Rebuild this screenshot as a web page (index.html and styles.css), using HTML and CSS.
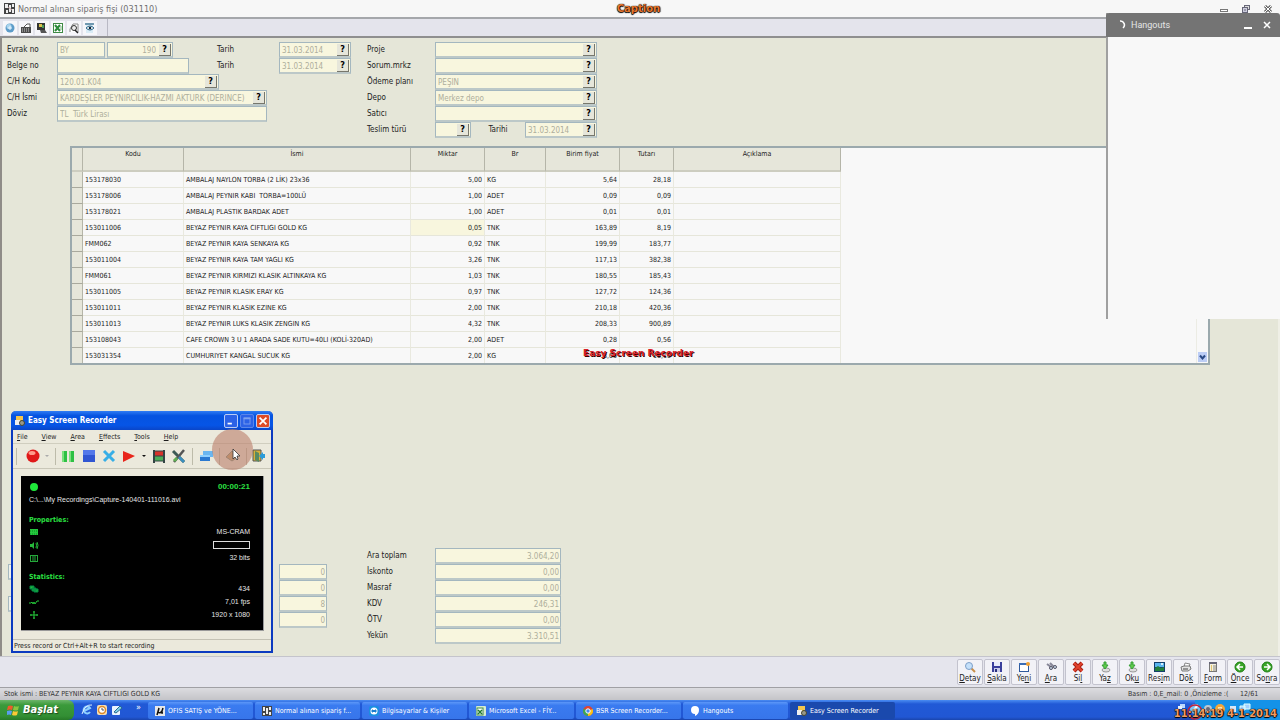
FILE: index.html
```html
<!DOCTYPE html>
<html lang="tr">
<head>
    <meta charset="UTF-8">
    <meta name="viewport" content="width=device-width, initial-scale=1.0">
    <title>Normal alınan sipariş fişi (031110)</title>
    <link rel="stylesheet" href="styles.css">
</head>
<body>
    <header class="title-bar">
        <div class="title-text">
            <svg class="title-icon" viewBox="0 0 11 11"><rect width="11" height="11" fill="#444"/><path d="M1 1h3v4H1zM5 2h2v7H5zM8 1h2v3H8zM2 7h2v3H2zM8 6h2v4H8z" fill="#eee"/><path d="M4 4l4 3" stroke="#b99" /></svg>
            <h1>Normal alınan sipariş fişi (031110)</h1>
        </div>
        <span class="caption">Caption</span>
        <div class="window-buttons">
            <button aria-label="Simge durumuna küçült"><svg viewBox="0 0 10 8"><rect x="1.5" y="4.5" width="7" height="2" fill="#fff" stroke="#777"/></svg></button>
            <button aria-label="Geri yükle"><svg viewBox="0 0 10 8"><rect x="3.5" y=".5" width="5" height="4" fill="#ddd" stroke="#667"/><rect x="1.5" y="2.5" width="5" height="5" fill="#ccd" stroke="#667"/><path d="M3 5h2" stroke="#667"/></svg></button>
            <button aria-label="Kapat"><svg viewBox="0 0 10 8"><path d="M2 1l6 6M8 1L2 7" stroke="#666" stroke-width="3"/><path d="M2 1l6 6M8 1L2 7" stroke="#fff"/></svg></button>
        </div>
    </header>

    <nav class="toolbar">
        <div class="toolbar-group">
            <button aria-label="Bilgi"><svg viewBox="0 0 12 12"><circle cx="6" cy="6" r="4.5" fill="#5d9cc9"/><circle cx="5" cy="4.5" r="2.5" fill="#a9d4ee"/><path d="M6 4v4M4 6h4" stroke="#e8f5ff"/></svg></button>
            <button aria-label="Yazdır"><svg viewBox="0 0 12 12"><path d="M4 5l3-3h3v3" fill="#fff" stroke="#555"/><path d="M1 5h10v6H1z" fill="#4c4c4c"/><path d="M2 7h8M2 9h8" stroke="#ccc" stroke-dasharray="1 1"/></svg></button>
            <button aria-label="Ekran"><svg viewBox="0 0 12 12"><rect x="1" y="1" width="8" height="7" fill="#333"/><path d="M3 2h3v3H3z" fill="#d8c24a"/><path d="M6 3h2v3H6z" fill="#4a9a5a"/><path d="M4 8h5l2 3H5z" fill="#555"/></svg></button>
            <button aria-label="Excel"><svg viewBox="0 0 12 12"><rect x="1.5" y="1.5" width="9" height="9" fill="#fff" stroke="#3f8a45"/><path d="M3 3l5 6M8 3L3 9" stroke="#2c8a3a" stroke-width="2"/><path d="M8 5h2M8 7h2" stroke="#7ab77f"/></svg></button>
            <button aria-label="Bul"><svg viewBox="0 0 12 12"><path d="M2 10V7l3-5h5v8" fill="#fff" stroke="#888"/><circle cx="6" cy="6" r="2.5" fill="#eee" stroke="#333"/><path d="M7 8l3 3" stroke="#222" stroke-width="1.5"/></svg></button>
            <button aria-label="Önizle"><svg viewBox="0 0 12 12"><path d="M2 1h7v10H2z" fill="#d9ebf5"/><path d="M1 2h9" stroke="#4b7c98" stroke-width="1.5"/><path d="M2 6q4-4 8 0q-4 4-8 0z" fill="#fff" stroke="#2c6a8c"/><circle cx="6" cy="6" r="1.3" fill="#123"/></svg></button>
        </div>
    </nav>

    <main class="document">
        <form class="fields">
            <label class="c1 r1" for="evrakSeri">Evrak no</label>
            <div class="pair c2 r1">
                <div class="field w48"><input type="text" id="evrakSeri" value="BY"></div>
                <div class="field w66 num"><input type="text" aria-label="Evrak sıra" value="190"><button type="button">?</button></div>
            </div>
            <label class="c1 r2" for="belge">Belge no</label>
            <div class="field c2 r2 w132"><input type="text" id="belge"></div>
            <label class="c1 r3" for="kod">C/H Kodu</label>
            <div class="field c2 r3 w162"><input type="text" id="kod" value="120.01.K04"><button type="button">?</button></div>
            <label class="c1 r4" for="isim">C/H İsmi</label>
            <div class="field c2 r4 w210"><input type="text" id="isim" value="KARDEŞLER PEYNİRCİLİK-HAZMİ AKTÜRK (DERİNCE)"><button type="button">?</button></div>
            <label class="c1 r5" for="doviz">Döviz</label>
            <div class="field c2 r5 w210"><input type="text" id="doviz" value="TL  Türk Lirası"></div>

            <label class="c3 r1" for="tarih1">Tarih</label>
            <div class="field c4 r1 w72"><input type="text" id="tarih1" value="31.03.2014"><button type="button">?</button></div>
            <label class="c3 r2" for="tarih2">Tarih</label>
            <div class="field c4 r2 w72"><input type="text" id="tarih2" value="31.03.2014"><button type="button">?</button></div>

            <label class="c5 r1" for="proje">Proje</label>
            <div class="field c6 r1 w162"><input type="text" id="proje"><button type="button">?</button></div>
            <label class="c5 r2" for="sorum">Sorum.mrkz</label>
            <div class="field c6 r2 w162"><input type="text" id="sorum"><button type="button">?</button></div>
            <label class="c5 r3" for="odeme">Ödeme planı</label>
            <div class="field c6 r3 w162"><input type="text" id="odeme" value="PEŞİN"><button type="button">?</button></div>
            <label class="c5 r4" for="depo">Depo</label>
            <div class="field c6 r4 w162"><input type="text" id="depo" value="Merkez depo"><button type="button">?</button></div>
            <label class="c5 r5" for="satici">Satıcı</label>
            <div class="field c6 r5 w162"><input type="text" id="satici"><button type="button">?</button></div>
            <label class="c5 r6" for="teslim">Teslim türü</label>
            <div class="pair spread c6 r6 w162">
                <div class="field w36"><input type="text" id="teslim"><button type="button">?</button></div>
                <label for="teslimTarih">Tarihi</label>
                <div class="field w72"><input type="text" id="teslimTarih" value="31.03.2014"><button type="button">?</button></div>
            </div>
        </form>

        <div class="grid-box">
            <table class="items">
                <colgroup>
                    <col class="col-head"><col class="col-kodu"><col class="col-ismi"><col class="col-miktar"><col class="col-br"><col class="col-fiyat"><col class="col-tutar"><col class="col-aciklama">
                </colgroup>
                <thead>
                    <tr><th></th><th>Kodu</th><th>İsmi</th><th>Miktar</th><th>Br</th><th>Birim fiyat</th><th>Tutarı</th><th>Açıklama</th></tr>
                </thead>
                <tbody>
                    <tr><th></th><td>153178030</td><td>AMBALAJ NAYLON TORBA (2 LİK) 23x36</td><td class="n">5,00</td><td>KG</td><td class="n">5,64</td><td class="n">28,18</td><td></td></tr>
                    <tr><th></th><td>153178006</td><td>AMBALAJ PEYNIR KABI&nbsp; TORBA=100LÜ</td><td class="n">1,00</td><td>ADET</td><td class="n">0,09</td><td class="n">0,09</td><td></td></tr>
                    <tr><th></th><td>153178021</td><td>AMBALAJ PLASTIK BARDAK ADET</td><td class="n">1,00</td><td>ADET</td><td class="n">0,01</td><td class="n">0,01</td><td></td></tr>
                    <tr><th></th><td>153011006</td><td>BEYAZ PEYNIR KAYA CIFTLIGI GOLD KG</td><td class="n active">0,05</td><td>TNK</td><td class="n">163,89</td><td class="n">8,19</td><td></td></tr>
                    <tr><th></th><td>FMM062</td><td>BEYAZ PEYNIR KAYA SENKAYA KG</td><td class="n">0,92</td><td>TNK</td><td class="n">199,99</td><td class="n">183,77</td><td></td></tr>
                    <tr><th></th><td>153011004</td><td>BEYAZ PEYNIR KAYA TAM YAGLI KG</td><td class="n">3,26</td><td>TNK</td><td class="n">117,13</td><td class="n">382,38</td><td></td></tr>
                    <tr><th></th><td>FMM061</td><td>BEYAZ PEYNIR KIRMIZI KLASIK ALTINKAYA KG</td><td class="n">1,03</td><td>TNK</td><td class="n">180,55</td><td class="n">185,43</td><td></td></tr>
                    <tr><th></th><td>153011005</td><td>BEYAZ PEYNIR KLASIK ERAY KG</td><td class="n">0,97</td><td>TNK</td><td class="n">127,72</td><td class="n">124,36</td><td></td></tr>
                    <tr><th></th><td>153011011</td><td>BEYAZ PEYNIR KLASIK EZINE KG</td><td class="n">2,00</td><td>TNK</td><td class="n">210,18</td><td class="n">420,36</td><td></td></tr>
                    <tr><th></th><td>153011013</td><td>BEYAZ PEYNIR LUKS KLASIK ZENGIN KG</td><td class="n">4,32</td><td>TNK</td><td class="n">208,33</td><td class="n">900,89</td><td></td></tr>
                    <tr><th></th><td>153108043</td><td>CAFE CROWN 3 U 1 ARADA SADE KUTU=40LI (KOLİ-320AD)</td><td class="n">2,00</td><td>ADET</td><td class="n">0,28</td><td class="n">0,56</td><td></td></tr>
                    <tr><th></th><td>153031354</td><td>CUMHURIYET KANGAL SUCUK KG</td><td class="n">2,00</td><td>KG</td><td class="n">8,05</td><td class="n">16,10</td><td></td></tr>
                </tbody>
            </table>
            <div class="scrollbar">
                <button aria-label="Aşağı"><svg viewBox="0 0 9 9"><path d="M2 3l2.5 3L7 3" fill="none" stroke="#2b4a85" stroke-width="2"/></svg></button>
            </div>
            <span class="watermark">Easy Screen Recorder</span>
        </div>

        <form class="totals">
            <div class="field blank r2"><input type="text" aria-label="Vade"></div>
            <div class="field blank r4"><input type="text" aria-label="Kur"></div>
            <div class="field num c4 r2 w48"><input type="text" aria-label="Oran 1" value="0"></div>
            <div class="field num c4 r3 w48"><input type="text" aria-label="Oran 2" value="0"></div>
            <div class="field num c4 r4 w48"><input type="text" aria-label="Oran 3" value="8"></div>
            <div class="field num c4 r5 w48"><input type="text" aria-label="Oran 4" value="0"></div>
            <label class="c5 r1" for="ara">Ara toplam</label>
            <div class="field num c6 r1 w126"><input type="text" id="ara" value="3.064,20"></div>
            <label class="c5 r2" for="iskonto">İskonto</label>
            <div class="field num c6 r2 w126"><input type="text" id="iskonto" value="0,00"></div>
            <label class="c5 r3" for="masraf">Masraf</label>
            <div class="field num c6 r3 w126"><input type="text" id="masraf" value="0,00"></div>
            <label class="c5 r4" for="kdv">KDV</label>
            <div class="field num c6 r4 w126"><input type="text" id="kdv" value="246,31"></div>
            <label class="c5 r5" for="otv">ÖTV</label>
            <div class="field num c6 r5 w126"><input type="text" id="otv" value="0,00"></div>
            <label class="c5 r6" for="yekun">Yekün</label>
            <div class="field num c6 r6 w126"><input type="text" id="yekun" value="3.310,51"></div>
        </form>
    </main>

    <div class="actions">
        <button><svg viewBox="0 0 14 12"><path d="M8 7l4 4" stroke="#c98f4a" stroke-width="2"/><circle cx="6" cy="5" r="3.5" fill="#c4e0fa" stroke="#7e9fc8"/></svg><span><u>D</u>etay</span></button>
        <button><svg viewBox="0 0 14 12"><path d="M2 1h10v10H2z" fill="#3a3f9c"/><path d="M4 1h6v4H4z" fill="#e8ecfa"/><path d="M4 7h6v4H4z" fill="#c9cdea"/><path d="M5 8h2v3H5z" fill="#2a2f7c"/></svg><span><u>S</u>akla</span></button>
        <button><svg viewBox="0 0 14 12"><rect x="2.5" y="2.5" width="9" height="8" fill="#fff" stroke="#2f5a9c"/><path d="M2 2h10v2H2z" fill="#3a6cb5"/><circle cx="11" cy="3" r="2" fill="#f0a030"/></svg><span>Ye<u>n</u>i</span></button>
        <button><svg viewBox="0 0 14 12"><path d="M3 3l4 3M6 2l4 4" stroke="#889" stroke-width="2"/><circle cx="7" cy="7" r="1.5" fill="#cde" stroke="#556"/><circle cx="11" cy="6" r="1.5" fill="#cde" stroke="#556"/></svg><span><u>A</u>ra</span></button>
        <button><svg viewBox="0 0 14 12"><path d="M3 2l8 8M11 2l-8 8" stroke="#a81f12" stroke-width="4"/><path d="M3 2l8 8M11 2l-8 8" stroke="#e2432e" stroke-width="2"/></svg><span>Si<u>l</u></span></button>
        <button><svg viewBox="0 0 14 12"><ellipse cx="8" cy="9" rx="4" ry="2" fill="#ddd" stroke="#999"/><path d="M6 1h2v3h2L7 8 4 4h2z" fill="#5fca4c" stroke="#37a037"/></svg><span>Ya<u>z</u></span></button>
        <button><svg viewBox="0 0 14 12"><ellipse cx="8" cy="9" rx="4" ry="2" fill="#ddd" stroke="#999"/><path d="M6 1h2v3h2L7 8 4 4h2z" fill="#5fca4c" stroke="#37a037"/></svg><span>Ok<u>u</u></span></button>
        <button><svg viewBox="0 0 14 12"><path d="M2 1h11v10H2z" fill="#123f6c"/><path d="M3 2h9v4H3z" fill="#5ab5ee"/><path d="M3 7l3-2 3 2 3-1v4H3z" fill="#23813b"/><circle cx="10" cy="3" r="1" fill="#fff"/></svg><span>Res<u>i</u>m</span></button>
        <button><svg viewBox="0 0 14 12"><path d="M5 6l1-4 5 1-1 3" fill="#fff" stroke="#888"/><path d="M2 6l3-1h6l1 3-3 2H3z" fill="#e3e3e3" stroke="#777"/><path d="M4 8h5" stroke="#444"/></svg><span>Dö<u>k</u></span></button>
        <button><svg viewBox="0 0 14 12"><rect x="3.5" y="1.5" width="7" height="9" fill="#f5f1dd" stroke="#777"/><path d="M3 2h8" stroke="#667" stroke-width="2"/><path d="M5 5h1M5 7h1M5 9h1" stroke="#c90"/><path d="M7 5h3M7 7h3M7 9h3" stroke="#888"/></svg><span><u>F</u>orm</span></button>
        <button><svg viewBox="0 0 14 12"><circle cx="7" cy="6" r="5" fill="#38a527" stroke="#1c7c12"/><path d="M10 6H5M7 3L4 6l3 3" fill="none" stroke="#fff" stroke-width="1.5"/></svg><span><u>Ö</u>nce</span></button>
        <button><svg viewBox="0 0 14 12"><circle cx="7" cy="6" r="5" fill="#38a527" stroke="#1c7c12"/><path d="M4 6h5M7 3l3 3-3 3" fill="none" stroke="#fff" stroke-width="1.5"/></svg><span>So<u>n</u>ra</span></button>
    </div>

    <footer class="status-bar">
        <span>Stok ismi : BEYAZ PEYNIR KAYA CIFTLIGI GOLD KG</span>
        <span class="status-cell">Basım : 0,E_mail: 0 ,Önizleme :(</span>
        <span class="status-page">12/61</span>
    </footer>

    <div class="taskbar">
        <button class="start">
            <svg viewBox="0 0 13 12"><path d="M1 2q2-1 5 0l-1 4q-2-1-5 0z" fill="#ee5a2b"/><path d="M7 2q3 1 5 0l-1 4q-2 1-5 0z" fill="#8ac640"/><path d="M0 7q3-1 5 0l-1 4q-2-1-4 0z" fill="#5a9cf0"/><path d="M6 7q3 1 5 0l-1 4q-2 1-5 0z" fill="#fbc935"/></svg>
            Başlat
        </button>
        <div class="quick">
            <button aria-label="Internet Explorer"><svg viewBox="0 0 12 12"><path d="M9 8a3.5 3.5 0 1 1 0-4L3 7" fill="none" stroke="#8fd0ff" stroke-width="2"/><path d="M1 10Q4 0 11 1" fill="none" stroke="#dbeeff"/></svg></button>
            <button aria-label="Outlook"><svg viewBox="0 0 12 12"><rect x="1" y="1" width="10" height="10" rx="2" fill="#f6dfb4"/><circle cx="6" cy="6" r="3.5" fill="#fff" stroke="#dc8a2a" stroke-width="1.5"/><path d="M6 4v2h2" stroke="#555" fill="none"/></svg></button>
            <button aria-label="Masaüstü"><svg viewBox="0 0 12 12"><rect x="1" y="2" width="8" height="9" rx="1" fill="#e8f4ff"/><path d="M3 8l6-6 2 2-6 5z" fill="#7fd0e8" stroke="#2a6a90"/></svg></button>
            <span class="more">»</span>
        </div>
        <div class="tasks">
            <button><svg viewBox="0 0 10 10"><rect width="10" height="10" fill="#e8e8e8"/><path d="M2 9L4 2M4 2L3 6q2 2 4-1l1-3M7 5v2h1" fill="none" stroke="#111" stroke-width="1.5"/></svg>OFIS SATIŞ ve YÖNE...</button>
            <button><svg viewBox="0 0 10 10"><rect width="10" height="10" fill="#444"/><path d="M1 1h2v4H1zM4 2h2v6H4zM7 1h2v3H7zM1 7h2v2H1zM7 6h2v3H7z" fill="#eee"/></svg>Normal alınan sipariş f...</button>
            <button><svg viewBox="0 0 10 10"><rect width="10" height="10" rx="2" fill="#1b8fe0"/><circle cx="5" cy="5" r="3.5" fill="#fff"/><path d="M2 5l2-2v1h2V3l2 2-2 2V6H4v1z" fill="#1b7fd0"/></svg>Bilgisayarlar &amp; Kişiler</button>
            <button><svg viewBox="0 0 10 10"><rect width="10" height="10" rx="1" fill="#d6edd0"/><rect x="1" y="2" width="6" height="7" fill="#fff" stroke="#3f8a45"/><path d="M2 4l4 4M6 4L2 8" stroke="#1d7a2c" stroke-width="1.5"/></svg>Microsoft Excel - FİY...</button>
            <button><svg viewBox="0 0 10 10"><circle cx="5" cy="5" r="5" fill="#e04434"/><path d="M5 5L.7 2.5A5 5 0 0 0 5 10z" fill="#3aa757"/><path d="M5 5l4.6-2A5 5 0 0 1 5 10z" fill="#fbc116"/><circle cx="5" cy="5" r="2.2" fill="#4a88f0" stroke="#fff"/></svg>BSR Screen Recorder...</button>
            <button><svg viewBox="0 0 10 10"><path d="M5 0a4 4 0 0 1 4 4q0 4-4 6V8a4 4 0 0 1 0-8z" fill="#fff"/></svg>Hangouts</button>
            <button class="current"><svg viewBox="0 0 10 10"><rect x="1" width="7" height="8" fill="#f4c64e"/><path d="M0 4h5v5H0z" fill="#eee"/><circle cx="7" cy="7" r="2.5" fill="#998" stroke="#443"/></svg>Easy Screen Recorder</button>
        </div>
        <div class="tray">
            <svg viewBox="0 0 90 20">
                <rect x="6" y="4" width="5" height="4" fill="#bcd8ff"/><rect x="4" y="6" width="4" height="3" fill="#e6f2ff"/>
                <circle cx="21" cy="9" r="5" fill="#7ec4f5"/><path d="M19 11l5-6" stroke="#fff" stroke-width="2"/>
                <circle cx="34" cy="9" r="4" fill="#c0c8d0"/><circle cx="34" cy="9" r="2" fill="#667"/>
                <circle cx="46" cy="9" r="5" fill="#f2a63a"/><path d="M44 7h4v4h-4z" fill="#ffe5a8"/>
                <path d="M56 6h6v6h-6z" fill="#d8e6f5"/><path d="M66 6h5v4h-5zM70 4h6v5h-6z" fill="#9fd0ff" stroke="#dff"/>
                <circle cx="21" cy="12" r="7" fill="none" stroke="#c4223a" stroke-width="1.5"/>
            </svg>
            <span class="clock">11:14:19 4-1-2014</span>
        </div>
    </div>

    <section class="hangouts">
        <div class="hangouts-head">
            <svg class="spinner" viewBox="0 0 10 10"><path d="M4 1a4 4 0 0 1 3 7" fill="none" stroke="#fff" stroke-width="1.5"/></svg>
            <h2>Hangouts</h2>
            <button aria-label="Minimize"><svg viewBox="0 0 8 8"><path d="M0 7h8" stroke="#fff" stroke-width="2"/></svg></button>
            <button aria-label="Close"><svg viewBox="0 0 8 8"><path d="M1 1l6 6M7 1L1 7" stroke="#fff" stroke-width="1.5"/></svg></button>
        </div>
    </section>

    <section class="recorder">
        <div class="rec-title">
            <svg viewBox="0 0 10 10"><rect x="1" width="7" height="8" fill="#f4c64e"/><path d="M0 4h5v5H0z" fill="#eee"/><circle cx="7" cy="7" r="2.5" fill="#998" stroke="#443"/></svg>
            <h2>Easy Screen Recorder</h2>
            <button aria-label="Minimize"><svg viewBox="0 0 14 14"><path d="M3 10h5" stroke="#fff" stroke-width="2"/></svg></button>
            <button class="dim" aria-label="Maximize"><svg viewBox="0 0 14 14"><rect x="3.5" y="3.5" width="7" height="7" fill="none" stroke="#7fa2ee"/><path d="M3 4h8" stroke="#7fa2ee" stroke-width="2"/></svg></button>
            <button class="close" aria-label="Close"><svg viewBox="0 0 14 14"><path d="M3 3l8 8M11 3l-8 8" stroke="#fff" stroke-width="2"/></svg></button>
        </div>
        <div class="rec-menu">
            <button><u>F</u>ile</button><button><u>V</u>iew</button><button><u>A</u>rea</button><button><u>E</u>ffects</button><button><u>T</u>ools</button><button><u>H</u>elp</button>
        </div>
        <div class="rec-tools">
            <i class="sep grip"></i>
            <button aria-label="Record"><svg viewBox="0 0 16 16"><circle cx="9" cy="8" r="6.5" fill="#e01818"/><ellipse cx="8" cy="5" rx="3.5" ry="2" fill="#ff9a8a"/></svg></button>
            <button class="drop dim" aria-label="Record options"></button>
            <i class="sep"></i>
            <button aria-label="Pause"><svg viewBox="0 0 16 16"><path d="M1 3h5v11H1zM8 3h5v11H8z" fill="#2ec044"/><path d="M1 3h2v11H1zM8 3h2v11H8z" fill="#7be07e"/></svg></button>
            <button aria-label="Stop"><svg viewBox="0 0 16 16"><path d="M2 2h12v12H2z" fill="#3156d2"/><path d="M2 2h12v5H2z" fill="#5478ea"/></svg></button>
            <button aria-label="Cancel"><svg viewBox="0 0 16 16"><path d="M3 3l10 10M13 3L3 13" stroke="#37aee6" stroke-width="3"/></svg></button>
            <button aria-label="Play"><svg viewBox="0 0 16 16"><path d="M2 3l12 5-12 6z" fill="#e8261c"/></svg></button>
            <button class="drop" aria-label="Play options"></button>
            <button aria-label="Movie"><svg viewBox="0 0 16 16"><path d="M2 2h2v13H2zM12 2h2v13h-2z" fill="#344"/><path d="M4 3h8v5H4z" fill="#d8332a"/><path d="M4 8h8v5H4z" fill="#4cae58"/><path d="M4 3h8M4 8h8M4 13h8" stroke="#344"/></svg></button>
            <button aria-label="Settings"><svg viewBox="0 0 16 16"><path d="M2 3l11 11" stroke="#3c5a55" stroke-width="3"/><path d="M13 2L3 14" stroke="#555" stroke-width="2.5"/><path d="M8 9l5 5" stroke="#3b8fc0" stroke-width="2.5"/><path d="M3 13l3-3" stroke="#5fae52" stroke-width="3"/></svg></button>
            <i class="sep"></i>
            <button aria-label="Windows"><svg viewBox="0 0 16 16"><path d="M5 3h10v6H5z" fill="#6ab6f0"/><path d="M2 7h10v6H2z" fill="#2b79d0"/><path d="M2 7h10v2H2z" fill="#8fd0ff"/></svg></button>
            <i class="sep"></i>
            <button aria-label="Help"><svg viewBox="0 0 16 16"><path d="M1 9l6-6 6 6-6 4z" fill="#c2a06c" stroke="#7b8f80"/></svg></button>
            <i class="sep"></i>
            <button aria-label="Exit"><svg viewBox="0 0 16 16"><path d="M1 2h8v11H1z" fill="#d9b13a" stroke="#555"/><path d="M3 3l4 2v9l-4-2z" fill="#5a8a60"/><path d="M7 8l4-4v2h2v4h-2v2z" fill="#2a9bd8"/></svg></button>
        </div>
        <div class="rec-screen">
            <div class="rec-row"><svg viewBox="0 0 10 10"><circle cx="5" cy="5" r="4" fill="#1fe83a"/></svg><strong>00:00:21</strong></div>
            <p>C:\...\My Recordings\Capture-140401-111016.avi</p>
            <h3>Properties:</h3>
            <div class="rec-row"><svg viewBox="0 0 10 10"><path d="M1 2h8v6H1z" fill="#25c83e"/><path d="M1 4h8M1 7h8" stroke="#0a8a20" stroke-dasharray="1 1"/></svg><span>MS-CRAM</span></div>
            <div class="rec-row"><svg viewBox="0 0 10 10"><path d="M1 4h2l2-2v7L3 7H1z" fill="#25b83a"/><path d="M7 3q1 2 0 5M8 2q2 3 0 7" fill="none" stroke="#25b83a"/></svg><span class="meter"></span></div>
            <div class="rec-row"><svg viewBox="0 0 10 10"><rect x="1.5" y="2.5" width="7" height="6" fill="none" stroke="#25a83a"/><path d="M4 2v7M6 2v7" stroke="#25a83a"/></svg><span>32 bits</span></div>
            <h3>Statistics:</h3>
            <div class="rec-row"><svg viewBox="0 0 10 10"><path d="M1 2h4v3H1zM3 4h4v3H3zM5 5h4v3H5z" fill="#25b83a" stroke="#084"/></svg><span>434</span></div>
            <div class="rec-row"><svg viewBox="0 0 10 10"><path d="M0 6h2l1-1 1 2 1-2 1 2 2-3h2" fill="none" stroke="#25c83a"/></svg><span>7,01 fps</span></div>
            <div class="rec-row"><svg viewBox="0 0 10 10"><path d="M5 1v8M1 5h8" stroke="#25c83a"/><path d="M4 2h2M4 8h2M2 4v2M8 4v2" stroke="#25b83a"/></svg><span>1920 x 1080</span></div>
        </div>
        <div class="rec-status">Press record or Ctrl+Alt+R to start recording</div>
        <span class="halo"></span>
        <svg class="cursor" viewBox="0 0 9 13"><path d="M1 1v10l2-2 2 3 1-1-1-3h3z" fill="#fff" stroke="#333" stroke-width=".8"/></svg>
    </section>
</body>
</html>
```
FILE: styles.css
```css
* {
    box-sizing: border-box;
}
body {
    margin: 0;
    min-height: 100vh;
    display: flex;
    flex-direction: column;
    position: relative;
    overflow: hidden;
    background-color: #e5e6d8;
    color: #1c1c1c;
    font-family: "DejaVu Sans Condensed", "Noto Sans", sans-serif;
    font-size: 7px;
    line-height: 10px;
}
button {
    font: inherit;
    color: inherit;
    border: none;
    padding: 0;
    background: none;
}
h1, h2, h3, p {
    margin: 0;
}
svg {
    display: block;
    flex: none;
}

/* window title */
.title-bar {
    display: flex;
    align-items: center;
    height: 19px;
    padding: 0 4px;
    background-color: #f7f7f7;
    border-bottom: 2px solid #a5a7ab;
}
.title-text {
    flex: 1;
    display: flex;
    align-items: center;
    gap: 3px;
}
.title-icon {
    width: 11px;
    height: 11px;
}
.title-bar h1 {
    font-size: 9px;
    font-weight: normal;
    color: #707070;
}
.caption {
    font: bold 10px/12px "DejaVu Sans", sans-serif;
    color: #e8772e;
    text-shadow: 0 0 1px #000, 1px 0 1px #000, 0 1px 1px #000;
}
.window-buttons {
    flex: 1;
    display: flex;
    justify-content: flex-end;
    gap: 12px;
    padding-right: 3px;
}
.window-buttons svg {
    width: 10px;
    height: 8px;
}

.toolbar {
    display: flex;
    height: 19px;
    background-color: #e4e4ec;
    border-bottom: 2px solid #8f8f8f;
}
.toolbar-group {
    display: flex;
    align-items: center;
    gap: 2px;
    width: 108px;
    padding-left: 3px;
    border-right: 1px solid #b9b9c4;
}
.toolbar-group button {
    background-color: #f6f6fa;
    padding: 1px;
}
.toolbar-group svg {
    width: 12px;
    height: 12px;
}

/* document body */
.document {
    flex: 1;
    display: flex;
    flex-direction: column;
    border-left: 2px solid #8f8c88;
    border-right: 2px solid #efefe6;
}
.fields, .totals {
    display: grid;
    grid-template-columns: 50px 160px 62px 88px 68px 162px;
    grid-template-rows: repeat(6, 16px);
    padding-left: 5px;
    font-size: 8px;
}
.fields {
    padding-top: 4px;
}
.c1 { grid-column: 1; }
.c2 { grid-column: 2; }
.c3 { grid-column: 3; }
.c4 { grid-column: 4; }
.c5 { grid-column: 5; }
.c6 { grid-column: 6; }
.r1 { grid-row: 1; }
.r2 { grid-row: 2; }
.r3 { grid-row: 3; }
.r4 { grid-row: 4; }
.r5 { grid-row: 5; }
.r6 { grid-row: 6; }
.w36 { width: 36px; }
.w48 { width: 48px; }
.w66 { width: 66px; }
.w72 { width: 72px; }
.w126 { width: 126px; }
.w132 { width: 132px; }
.w162 { width: 162px; }
.w210 { width: 210px; }
.pair {
    display: flex;
    gap: 2px;
}
.spread {
    justify-content: space-between;
}
label {
    padding-top: 3px;
}
.field {
    display: flex;
    align-items: center;
    height: 16px;
    z-index: 1;
    background-color: #f8f6de;
    border: 1px solid #a4b7bf;
    border-bottom: 2px solid #bcc8c8;
}
.field input {
    flex: 1;
    width: 0;
    height: 13px;
    border: none;
    padding: 2px 1px 0 2px;
    background: none;
    color: #aeae9c;
    font: inherit;
    white-space: pre;
}
.num input {
    text-align: right;
}
.field button {
    width: 12px;
    height: 12px;
    margin: 0 1px 0 2px;
    background-color: #e6e6da;
    border-right: 1px solid #77776c;
    border-bottom: 1px solid #77776c;
    color: #000;
    font-weight: bold;
    font-size: 9px;
}

/* order lines */
.grid-box {
    display: flex;
    justify-content: space-between;
    align-items: flex-start;
    position: relative;
    height: 219px;
    margin: 8px 68px 0;
    overflow: hidden;
    background-color: #f8f8f8;
    border: 2px solid #9ba9ad;
}
.items {
    table-layout: fixed;
    width: 769px;
    border-collapse: separate;
    border-spacing: 0;
}
.col-head { width: 11px; }
.col-kodu { width: 101px; }
.col-ismi { width: 227px; }
.col-miktar { width: 74px; }
.col-br { width: 61px; }
.col-fiyat { width: 74px; }
.col-tutar { width: 54px; }
.col-aciklama { width: 167px; }
.items th {
    background-color: #e6e6da;
    border-right: 1px solid #b5b5a8;
    border-bottom: 1px solid #a9a99d;
    padding: 0;
    font-weight: normal;
}
.items thead th {
    height: 24px;
    padding-top: 1px;
    vertical-align: top;
    border-bottom: 2px solid #cdcdc0;
}
.items td {
    height: 16px;
    padding: 0 2px;
    white-space: nowrap;
    border-right: 1px solid #e9e9df;
    border-bottom: 1px solid #e6e6da;
}
.items .n {
    text-align: right;
}
.items .active {
    background-color: #f8f6de;
}
.scrollbar {
    display: flex;
    align-items: flex-end;
    align-self: stretch;
    width: 12px;
    padding: 0 1px 1px;
    border-left: 1px solid #ecece4;
}
.scrollbar button {
    background-color: #bccdf5;
}
.scrollbar svg {
    width: 9px;
    height: 10px;
}
.watermark {
    position: absolute;
    left: 511px;
    bottom: 4px;
    font: bold 9px/12px "DejaVu Sans", sans-serif;
    color: #d8232a;
    text-shadow: 1px 1px 0 #300;
}

.totals {
    margin-top: auto;
    padding-bottom: 12px;
}
.blank {
    grid-column: 1;
    width: 40px;
    margin-left: 1px;
    background-color: #eff0ea;
}

/* bottom command row */
.actions {
    display: flex;
    justify-content: flex-end;
    gap: 1px;
    height: 31px;
    padding-top: 2px;
    background-color: #e5e5ed;
    border-top: 1px solid #c4c4cc;
}
.actions button {
    display: flex;
    flex-direction: column;
    align-items: center;
    justify-content: space-between;
    width: 26px;
    height: 26px;
    padding-top: 1px;
    font-size: 8px;
    background-color: #f2f2f7;
    border: 1px solid #c3c3ce;
    border-radius: 2px;
}
.actions svg {
    width: 14px;
    height: 12px;
}

.status-bar {
    display: flex;
    align-items: center;
    height: 13px;
    padding-left: 4px;
    color: #333;
    background: linear-gradient(#dcdce0, #c4c4c8);
    border-top: 1px solid #a0a0a4;
}
.status-cell {
    width: 112px;
    margin-left: auto;
}
.status-page {
    width: 40px;
}

/* taskbar */
.taskbar {
    display: flex;
    height: 20px;
    color: #fff;
    background: linear-gradient(#4a8cf2, #2159d6 20%, #2157d4 85%, #1a45ad);
}
.start {
    display: flex;
    align-items: center;
    gap: 3px;
    width: 74px;
    padding-left: 7px;
    color: #fff;
    font: italic bold 11px/14px "DejaVu Sans Condensed", sans-serif;
    text-shadow: 1px 1px 1px #1c4a1c;
    background: linear-gradient(#6cb56a, #3b9a3b 25%, #338f34 80%, #277a28);
    border-radius: 0 6px 6px 0;
}
.start svg {
    width: 13px;
    height: 12px;
}
.quick {
    display: flex;
    align-items: center;
    gap: 3px;
    width: 74px;
    padding-left: 7px;
}
.quick svg {
    width: 12px;
    height: 12px;
}
.more {
    margin-left: 10px;
    padding-bottom: 6px;
    font-size: 9px;
}
.tasks {
    display: flex;
    flex: 1;
    gap: 2px;
    padding-top: 2px;
}
.tasks button {
    display: flex;
    align-items: center;
    gap: 3px;
    width: 105px;
    height: 17px;
    padding-left: 7px;
    text-align: left;
    white-space: nowrap;
    background: linear-gradient(#5c97f8, #3a7bf0 20%, #3775ea);
    border-radius: 2px;
}
.tasks svg {
    width: 10px;
    height: 10px;
}
.tasks .current {
    background: #1a49ad;
}
.tray {
    position: relative;
    width: 106px;
    background: linear-gradient(90deg, transparent 21px, #1492e8 21px);
}
.tray svg {
    width: 90px;
    height: 20px;
}
.clock {
    position: absolute;
    right: 3px;
    bottom: 0;
    font: bold 10px/12px "DejaVu Sans", sans-serif;
    color: #f09a60;
    text-shadow: 0 0 1px #000, 1px 0 1px #000, 0 1px 1px #000;
    white-space: nowrap;
}

/* chat popup over the window */
.hangouts {
    position: absolute;
    top: 13px;
    right: 0;
    z-index: 2;
    width: 174px;
    height: 306px;
    background-color: #f8f8f8;
    border-left: 2px solid #a0a0a0;
}
.hangouts-head {
    display: flex;
    align-items: center;
    gap: 11px;
    height: 24px;
    margin-left: -2px;
    padding: 0 9px 0 10px;
    color: #e6e6e6;
    background-color: #747474;
    border-radius: 3px 3px 0 0;
}
.hangouts h2 {
    flex: 1;
    margin-left: -6px;
    font: 9px/12px Roboto, sans-serif;
}
.spinner {
    width: 10px;
    height: 10px;
}
.hangouts button svg {
    width: 8px;
    height: 8px;
}

/* recorder window */
.recorder {
    position: absolute;
    top: 411px;
    left: 11px;
    z-index: 3;
    width: 262px;
    height: 242px;
    display: flex;
    flex-direction: column;
    background-color: #ebe9dc;
    border: 2px solid #0b3ac0;
    border-top: none;
    border-radius: 5px 5px 0 0;
}
.rec-title {
    display: flex;
    align-items: center;
    gap: 2px;
    height: 19px;
    margin: 0 -2px;
    padding: 0 3px 0 4px;
    color: #fff;
    background: linear-gradient(#2f7cf4, #0553e0 25%, #0655e6 75%, #0a45c8);
    border-radius: 5px 5px 0 0;
}
.rec-title h2 {
    flex: 1;
    margin-left: 1px;
    font-size: 8px;
}
.rec-title > svg {
    width: 10px;
    height: 10px;
}
.rec-title button {
    border: 1px solid #b9ccf6;
    border-radius: 2px;
    background-color: #2c62e6;
}
.rec-title button svg {
    width: 12px;
    height: 12px;
}
.rec-title .dim {
    border-color: #5a86ea;
}
.rec-title .close {
    background-color: #de4b26;
}
.rec-menu {
    display: flex;
    align-items: center;
    gap: 14px;
    height: 14px;
    padding-left: 4px;
    border-bottom: 1px solid #d0cebf;
}
.rec-tools {
    display: flex;
    align-items: center;
    gap: 4px;
    height: 25px;
    padding-left: 2px;
    border-bottom: 1px solid #c9c7b8;
}
.rec-tools svg {
    width: 16px;
    height: 16px;
}
.sep {
    width: 1px;
    height: 17px;
    margin: 0 1px;
    background-color: #bdbbaa;
}
.grip {
    margin-right: 3px;
}
.drop {
    margin: 0 1px;
    border: 2px solid transparent;
    border-top-color: #111;
    border-bottom: none;
}
.drop.dim {
    border-top-color: #aaa;
}
.rec-screen {
    flex: 1;
    margin: 7px 7px 8px 8px;
    padding: 4px 13px 0 8px;
    color: #e6e6e6;
    background-color: #000;
    border-right: 1px solid #999;
    border-bottom: 1px solid #999;
    font-family: "Liberation Sans", sans-serif;
}
.rec-row {
    display: flex;
    align-items: center;
    justify-content: space-between;
    height: 13px;
}
.rec-row svg {
    width: 10px;
    height: 10px;
}
.rec-screen p {
    line-height: 14px;
}
.rec-screen h3 {
    margin-top: 8px;
    font: bold 7px/10px "DejaVu Sans Condensed", sans-serif;
    color: #2be043;
}
.rec-screen strong {
    font-size: 8px;
    color: #2be043;
}
.meter {
    width: 37px;
    height: 8px;
    border: 1px solid #ddd;
}
.rec-status {
    height: 12px;
    line-height: 12px;
    padding-left: 1px;
    border-top: 1px solid #c4c2b4;
}
.halo {
    position: absolute;
    top: 18px;
    left: 199px;
    width: 41px;
    height: 41px;
    border-radius: 50%;
    background-color: rgba(186, 126, 106, 0.6);
}
.cursor {
    position: absolute;
    top: 37px;
    left: 219px;
    width: 9px;
    height: 13px;
}
```
